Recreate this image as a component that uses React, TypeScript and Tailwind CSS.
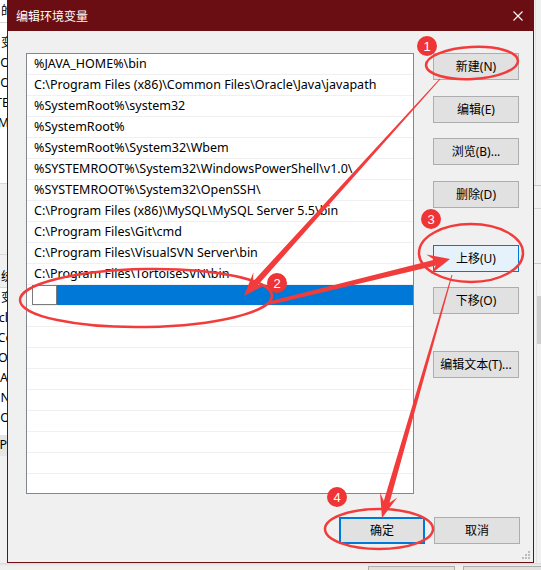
import React from "react";

const rows = [
  "%JAVA_HOME%\\bin",
  "C:\\Program Files (x86)\\Common Files\\Oracle\\Java\\javapath",
  "%SystemRoot%\\system32",
  "%SystemRoot%",
  "%SystemRoot%\\System32\\Wbem",
  "%SYSTEMROOT%\\System32\\WindowsPowerShell\\v1.0\\",
  "%SYSTEMROOT%\\System32\\OpenSSH\\",
  "C:\\Program Files (x86)\\MySQL\\MySQL Server 5.5\\bin",
  "C:\\Program Files\\Git\\cmd",
  "C:\\Program Files\\VisualSVN Server\\bin",
  "C:\\Program Files\\TortoiseSVN\\bin",
];

const FONT = { fontFamily: '"Noto Sans", "Noto Sans CJK SC", sans-serif' };

function Btn({
  label,
  variant = "normal",
  className = "",
}: {
  label: string;
  variant?: "normal" | "hover" | "default";
  className?: string;
}) {
  const v =
    variant === "hover"
      ? "bg-[#e5f1fb] border border-[#0078d7]"
      : variant === "default"
      ? "bg-[#e1e1e1] border-2 border-[#0078d7]"
      : "bg-[#e1e1e1] border border-[#adadad]";
  return (
    <div
      className={`w-[86px] h-[27px] flex items-center justify-center text-[12px] text-black ${v} ${className}`}
      style={FONT}
    >
      {label}
    </div>
  );
}

function arrowPts(
  x1: number,
  y1: number,
  x2: number,
  y2: number,
  w1: number,
  w2: number,
  hl: number,
  hw: number
) {
  const dx = x2 - x1;
  const dy = y2 - y1;
  const L = Math.hypot(dx, dy);
  const ux = dx / L;
  const uy = dy / L;
  const nx = -uy;
  const ny = ux;
  const bx = x2 - ux * hl * 0.7;
  const by = y2 - uy * hl * 0.7;
  const hx = x2 - ux * hl;
  const hy = y2 - uy * hl;
  const p = [
    [x1 + (nx * w1) / 2, y1 + (ny * w1) / 2],
    [bx + (nx * w2) / 2, by + (ny * w2) / 2],
    [hx + (nx * hw) / 2, hy + (ny * hw) / 2],
    [x2, y2],
    [hx - (nx * hw) / 2, hy - (ny * hw) / 2],
    [bx - (nx * w2) / 2, by - (ny * w2) / 2],
    [x1 - (nx * w1) / 2, y1 - (ny * w1) / 2],
  ];
  return p.map((q) => `${q[0].toFixed(1)},${q[1].toFixed(1)}`).join(" ");
}

function Badge({ cx, cy, n }: { cx: number; cy: number; n: string }) {
  return (
    <g>
      <circle cx={cx} cy={cy} r={10} fill="#ee3434" />
      <text
        x={cx}
        y={cy + 4.5}
        textAnchor="middle"
        fontSize="13"
        fill="#ffffff"
        fontFamily='"Liberation Sans", Arial, sans-serif'
      >
        {n}
      </text>
    </g>
  );
}

function Annotations() {
  const red = "#f23c3c";
  return (
    <svg
      className="absolute left-0 top-0 pointer-events-none"
      width={541}
      height={570}
      viewBox="0 0 541 570"
    >
      <ellipse cx={472} cy={63} rx={46} ry={16} transform="rotate(-3 472 63)" fill="none" stroke={red} strokeWidth={2.5} />
      <ellipse cx={146} cy={298} rx={126} ry={29} transform="rotate(-1 146 298)" fill="none" stroke={red} strokeWidth={2.5} />
      <ellipse cx={471} cy={253} rx={52} ry={29} fill="none" stroke={red} strokeWidth={2.5} />
      <ellipse cx={379} cy={529} rx={54} ry={20} fill="none" stroke={red} strokeWidth={2.5} />
      <polygon points={arrowPts(440, 79, 244, 296, 1, 6, 24, 18)} fill={red} />
      <polygon points={arrowPts(270, 303, 450, 259, 3.5, 6, 22, 20)} fill={red} />
      <polygon points={arrowPts(452, 275, 382, 518, 1, 6, 24, 18)} fill={red} />
      <Badge cx={427} cy={46} n="1" />
      <Badge cx={277} cy={283} n="2" />
      <Badge cx={431} cy={219} n="3" />
      <Badge cx={337} cy={497} n="4" />
    </svg>
  );
}

function LeftStrip() {
  const line = "h-[20px] flex items-center justify-end overflow-hidden whitespace-nowrap text-[12.5px] text-black";
  return (
    <div className="w-[7px] h-full flex flex-col bg-[#f0f0f0] overflow-hidden" style={FONT}>
      <div className="h-[22px] bg-white flex items-center justify-end text-[12px]">
        <span className="mr-[-6px]">的</span>
      </div>
      <div className="h-px bg-[#d9d9d9]" />
      <div className="h-[160px] bg-white flex flex-col pt-[10px]">
        <div className={line}><span className="mr-[-6px] text-[12px]">变</span></div>
        <div className={line}><span className="mr-[-3px]">O</span></div>
        <div className={line}><span className="mr-[-3px]">O</span></div>
        <div className={line}><span className="mr-[-2px]">TE</span></div>
        <div className={line}><span className="mr-[-2px]">TM</span></div>
      </div>
      <div className="h-px bg-[#d9d9d9]" />
      <div className="h-[70px] bg-[#f0f0f0]" />
      <div className="h-px bg-[#d9d9d9]" />
      <div className="h-[32px] bg-[#f0f0f0] flex items-end justify-end text-[12px] pb-[1px]">
        <span className="mr-[-6px]">统</span>
      </div>
      <div className="h-px bg-[#d9d9d9]" />
      <div className="h-[147px] bg-white flex flex-col">
        <div className={line}><span className="mr-[-6px] text-[12px]">变</span></div>
        <div className={line}><span className="mr-[-8px]">cla</span></div>
        <div className={line}><span className="mr-[-6px]">Co</span></div>
        <div className={line}><span className="mr-[-6px]">Or</span></div>
        <div className={line}><span className="mr-[-1px]">A</span></div>
        <div className={line}><span className="mr-[-3px]">N</span></div>
        <div className={line}><span className="mr-[-3px]">O</span></div>
      </div>
      <div className="h-[21px] bg-[#e5e5e5] flex items-center justify-end text-[12.5px]">
        <span className="mr-[-7px]">Pa</span>
      </div>
      <div className="flex-1 bg-[#f0f0f0]" />
    </div>
  );
}

function RightStrip() {
  return (
    <div className="flex-1 h-full bg-[#f0f0f0] flex flex-col">
      <div className="h-[185px] border-l border-[#e3e3e3] ml-[1px]" />
      <div className="h-px bg-[#c8c8c8]" />
      <div className="h-[22px]" />
      <div className="h-px bg-[#d5d5d5]" />
      <div className="h-[54px]" />
      <div className="h-px bg-[#c8c8c8]" />
      <div className="h-[16px]" />
      <div className="flex-1 flex">
        <div className="w-[2px]" />
        <div className="w-px bg-[#e3e3e3]" />
        <div className="flex-1 flex flex-col">
          <div className="h-[16px]" />
          <div className="h-[48px] bg-[#cdcdcd]" />
        </div>
      </div>
    </div>
  );
}

function Grip() {
  const dots: [number, number][] = [
    [6, 0],
    [3, 3],
    [6, 3],
    [0, 6],
    [3, 6],
    [6, 6],
  ];
  return (
    <svg width={8} height={8} viewBox="0 0 8 8" className="absolute right-[3px] bottom-[3px]">
      {dots.map(([x, y], i) => (
        <rect key={i} x={x} y={y} width={2} height={2} fill="#bcbcbc" />
      ))}
    </svg>
  );
}

export default function App() {
  return (
    <div className="w-[541px] h-[570px] relative overflow-hidden bg-[#f0f0f0] flex flex-col">
      <div className="h-[563px] flex">
        <LeftStrip />
        <div className="w-[527px] h-[563px] border border-t-0 border-[#6a0e13] bg-[#f0f0f0] flex flex-col relative">
          <div className="h-[31px] bg-[#6a0e13] -mx-px flex items-center justify-between pl-[9px] pr-[11px]">
            <span className="text-white text-[12px]" style={{ fontFamily: '"Noto Sans CJK SC", sans-serif' }}>
              编辑环境变量
            </span>
            <svg width={10} height={10} viewBox="0 0 10 10">
              <path d="M0.5 0.5 L9.5 9.5 M9.5 0.5 L0.5 9.5" stroke="#ffffff" strokeWidth={1.1} />
            </svg>
          </div>
          <div className="flex pl-[18px] pt-[22px]">
            <div className="w-[388px] h-[441px] border border-[#828790] bg-white overflow-hidden flex flex-col">
              {rows.map((r) => (
                <div
                  key={r}
                  className="h-[21px] shrink-0 border-b border-[#f0f0f0] flex items-center pl-[7px] pt-px text-[12.5px] text-black whitespace-nowrap"
                  style={FONT}
                >
                  {r}
                </div>
              ))}
              <div className="h-[21px] shrink-0 border-b border-[#f0f0f0] flex">
                <div className="w-[5px]" />
                <div className="w-[25px] h-[20px] border border-[#7a7a7a] bg-white" />
                <div className="flex-1 h-[20px] bg-[#0078d7]" />
              </div>
              {Array.from({ length: 9 }).map((_, i) => (
                <div key={i} className="h-[21px] shrink-0 border-b border-[#f0f0f0]" />
              ))}
            </div>
            <div className="ml-[19px] flex flex-col">
              <Btn label="新建(N)" />
              <Btn label="编辑(E)" className="mt-[16px]" />
              <Btn label="浏览(B)..." className="mt-[15px]" />
              <Btn label="删除(D)" className="mt-[16px]" />
              <Btn label="上移(U)" variant="hover" className="mt-[37px]" />
              <Btn label="下移(O)" className="mt-[15px]" />
              <Btn label="编辑文本(T)..." className="mt-[37px]" />
            </div>
          </div>
          <div className="flex justify-end gap-[9px] pr-[13px] mt-[23px]">
            <Btn label="确定" variant="default" />
            <Btn label="取消" />
          </div>
          <Grip />
        </div>
        <RightStrip />
      </div>
      <div className="flex-1 flex bg-[#f0f0f0] shadow-[inset_0_3px_3px_-2px_rgba(0,0,0,0.12)]">
        <div className="w-[368px]" />
        <div className="w-[87px] mt-[3px] border border-b-0 border-[#adadad] bg-[#e1e1e1]" />
        <div className="w-[8px]" />
        <div className="flex-1 mt-[3px] border border-b-0 border-r-0 border-[#adadad] bg-[#e1e1e1]" />
      </div>
      <Annotations />
    </div>
  );
}
